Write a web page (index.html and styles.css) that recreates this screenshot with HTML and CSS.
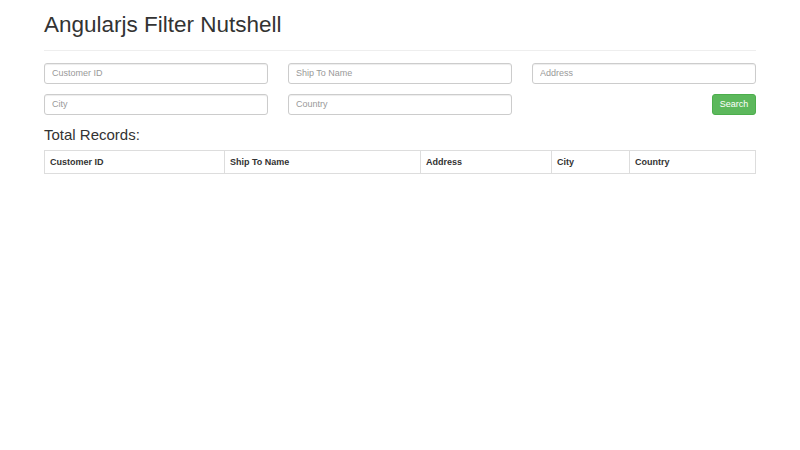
FILE: index.html
```html
<!DOCTYPE html>
<html>
<head>
<meta charset="utf-8">
<title>Angularjs Filter Nutshell</title>
<link rel="stylesheet" href="styles.css">
</head>
<body>
<div class="container">
  <div class="page-header">
    <h1>Angularjs Filter Nutshell</h1>
  </div>
  <form class="filters">
    <input class="field" type="text" placeholder="Customer ID">
    <input class="field" type="text" placeholder="Ship To Name">
    <input class="field" type="text" placeholder="Address">
    <input class="field" type="text" placeholder="City">
    <input class="field" type="text" placeholder="Country">
    <div class="actions"><button class="btn-search" type="button">Search</button></div>
  </form>
  <h3 class="total">Total Records:</h3>
  <table class="records">
    <thead>
      <tr>
        <th class="c-id">Customer ID</th>
        <th class="c-ship">Ship To Name</th>
        <th class="c-addr">Address</th>
        <th class="c-city">City</th>
        <th class="c-country">Country</th>
      </tr>
    </thead>
    <tbody></tbody>
  </table>
</div>
</body>
</html>
```
FILE: styles.css
```css
html, body {
  margin: 0;
  padding: 0;
  background: #fff;
}
body {
  font-family: "Liberation Sans", Arial, Helvetica, sans-serif;
  color: #333;
  font-size: 9px;
}
.container {
  padding: 0 44px;
}
.page-header {
  border-bottom: 1px solid #eee;
  padding-bottom: 12px;
  margin-bottom: 12px;
}
.page-header h1 {
  margin: 13px 0 0;
  font-size: 22.5px;
  font-weight: 400;
  line-height: 1.1;
  color: #333;
}
.filters {
  display: grid;
  grid-template-columns: 1fr 1fr 1fr;
  column-gap: 20px;
  row-gap: 10px;
  margin: 0;
}
.field {
  box-sizing: border-box;
  height: 21px;
  width: 100%;
  border: 1px solid #ccc;
  border-radius: 3px;
  padding: 0 7px;
  font-family: "Liberation Sans", Arial, sans-serif;
  font-size: 9px;
  color: #555;
  box-shadow: inset 0 1px 1px rgba(0,0,0,0.075);
  outline: none;
}
.field::placeholder {
  color: #999;
}
.actions {
  display: flex;
  justify-content: flex-end;
}
.btn-search {
  box-sizing: border-box;
  height: 21px;
  width: 44px;
  padding: 0;
  background: #5cb85c;
  border: 1px solid #4cae4c;
  border-radius: 3px;
  color: #fff;
  font-family: "Liberation Sans", Arial, sans-serif;
  font-size: 9px;
}
.total {
  margin: 12.5px 0 6px;
  font-size: 15px;
  font-weight: 400;
  line-height: 1.1;
}
.records {
  width: 100%;
  border-collapse: collapse;
  border: 1px solid #ddd;
}
.records th {
  text-align: left;
  font-weight: 700;
  font-size: 9px;
  height: 23px;
  box-sizing: border-box;
  padding: 1px 5px 0;
  border: 1px solid #ddd;
  color: #333;
}
.c-id { width: 180px; }
.c-ship { width: 196px; }
.c-addr { width: 131px; }
.c-city { width: 78px; }
.c-country { width: auto; }
```
